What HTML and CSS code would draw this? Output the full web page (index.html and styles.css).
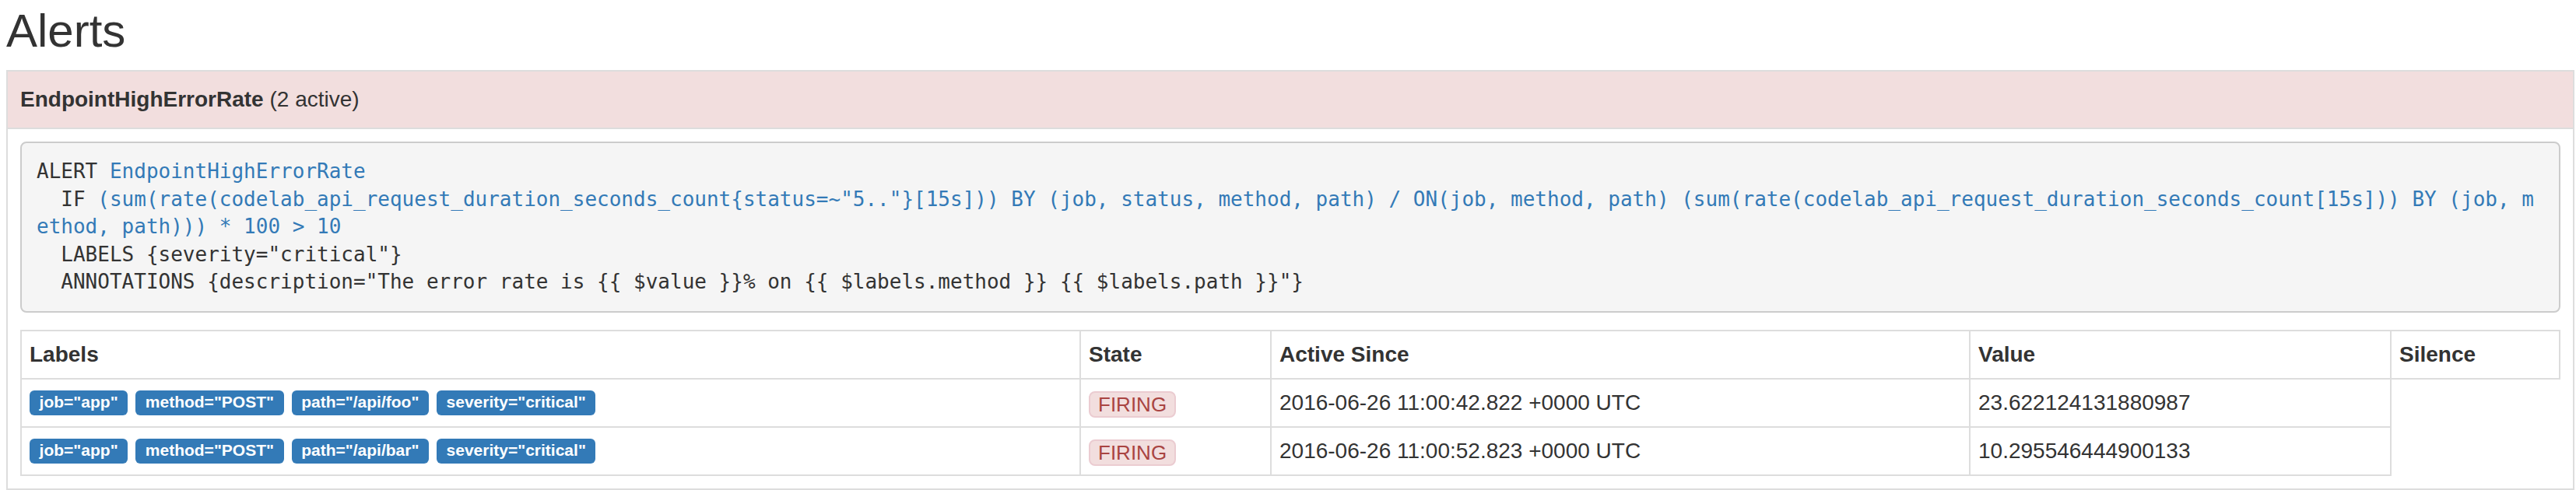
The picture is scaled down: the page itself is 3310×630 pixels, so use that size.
FILE: index.html
```html
<!DOCTYPE html>
<html lang="en">
<head>
<meta charset="utf-8">
<title>Alerts</title>
<link rel="stylesheet" href="styles.css">
</head>
<body>
<div class="page">
  <h2 class="title">Alerts</h2>
  <div class="alert-panel">
    <div class="alert-head"><b>EndpointHighErrorRate</b> (2 active)</div>
    <div class="alert-body">
      <pre class="rule">ALERT <span class="hl">EndpointHighErrorRate</span>
  IF <span class="hl">(sum(rate(codelab_api_request_duration_seconds_count{status=~"5.."}[15s])) BY (job, status, method, path) / ON(job, method, path) (sum(rate(codelab_api_request_duration_seconds_count[15s])) BY (job, method, path))) * 100 &gt; 10</span>
  LABELS {severity="critical"}
  ANNOTATIONS {description="The error rate is {{ $value }}% on {{ $labels.method }} {{ $labels.path }}"}</pre>
      <table class="elements">
        <colgroup>
          <col class="c-labels">
          <col class="c-state">
          <col class="c-since">
          <col class="c-value">
          <col class="c-silence">
        </colgroup>
        <thead>
          <tr><th>Labels</th><th>State</th><th>Active Since</th><th>Value</th><th>Silence</th></tr>
        </thead>
        <tbody>
          <tr>
            <td><div class="labels"><span class="label">job="app"</span><span class="label">method="POST"</span><span class="label">path="/api/foo"</span><span class="label">severity="critical"</span></div></td>
            <td><span class="state">FIRING</span></td>
            <td>2016-06-26 11:00:42.822 +0000 UTC</td>
            <td>23.622124131880987</td>
          </tr>
          <tr>
            <td><div class="labels"><span class="label">job="app"</span><span class="label">method="POST"</span><span class="label">path="/api/bar"</span><span class="label">severity="critical"</span></div></td>
            <td><span class="state">FIRING</span></td>
            <td>2016-06-26 11:00:52.823 +0000 UTC</td>
            <td>10.295546444900133</td>
          </tr>
        </tbody>
      </table>
    </div>
  </div>
</div>
</body>
</html>
```
FILE: styles.css
```css
html, body {
  margin: 0;
  padding: 0;
  background: #fff;
}
body {
  font-family: "Liberation Sans", Arial, Helvetica, sans-serif;
  color: #333;
  font-size: 28px;
  line-height: 40px;
}
.page {
  padding: 0 2px 0 8px;
}
.title {
  margin: 7px 0 17px;
  font-size: 60px;
  line-height: 66px;
  font-weight: 500;
  color: #333;
}
.alert-panel {
  border: 2px solid #ddd;
}
.alert-head {
  background: #f2dede;
  padding: 16px;
  line-height: 40px;
  border-bottom: 2px solid #ddd;
}
.alert-head b {
  font-weight: bold;
}
.alert-body {
  padding: 16px;
}
.rule {
  margin: 0 0 22px;
  padding: 19px;
  border: 2px solid #ccc;
  border-radius: 8px;
  background: #f5f5f5;
  color: #333;
  font-family: "DejaVu Sans Mono", Menlo, monospace;
  font-size: 26px;
  line-height: 35.6px;
  white-space: pre-wrap;
  word-break: break-all;
  overflow-wrap: break-word;
}
.hl {
  color: #337ab7;
}
.elements {
  width: 100%;
  border-collapse: collapse;
  table-layout: fixed;
}
.c-labels { width: 1361px; }
.c-state { width: 245px; }
.c-since { width: 898px; }
.c-value { width: 541px; }
.elements th,
.elements td {
  border: 2px solid #ddd;
  padding: 10px;
  text-align: left;
  vertical-align: middle;
  line-height: 40px;
  font-size: 28px;
}
.elements th {
  font-weight: bold;
}
.labels {
  display: flex;
  align-items: center;
  gap: 10px;
  height: 40px;
}
.label {
  display: inline-block;
  background: #337ab7;
  color: #fff;
  font-weight: bold;
  font-size: 21px;
  line-height: 1;
  padding: 4px 12.6px 6.5px;
  border-radius: 6px;
  white-space: nowrap;
}
.state {
  display: inline-block;
  vertical-align: middle;
  font-size: 26px;
  line-height: 30px;
  padding: 0 10px;
  color: #a94442;
  background: #f2dede;
  border: 2px solid #ebccd1;
  border-radius: 8px;
}
```
